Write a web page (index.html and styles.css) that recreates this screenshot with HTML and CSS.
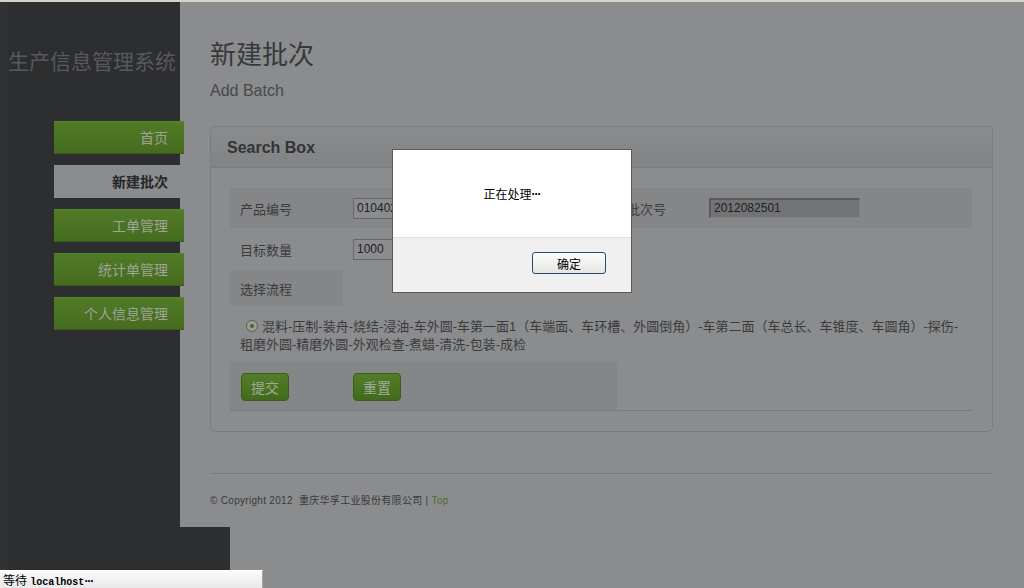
FILE: index.html
```html
<!DOCTYPE html>
<html lang="zh-CN">
<head>
<meta charset="utf-8">
<title>新建批次</title>
<link rel="stylesheet" href="styles.css">
</head>
<body>
<div class="topline"></div>
<div class="wrap">
  <aside class="sidebar">
    <div class="brand">生产信息管理系统</div>
    <nav class="menu">
      <a class="item">首页</a>
      <a class="item active">新建批次</a>
      <a class="item">工单管理</a>
      <a class="item">统计单管理</a>
      <a class="item">个人信息管理</a>
    </nav>
  </aside>
  <main class="main">
    <h1 class="title">新建批次</h1>
    <div class="subtitle">Add Batch</div>
    <section class="panel">
      <div class="panel-head">Search Box</div>
      <div class="panel-body">
        <table class="form">
          <colgroup>
            <col class="c1"><col class="c2"><col class="c3"><col class="c4">
          </colgroup>
          <tr class="r1 shade">
            <td>产品编号</td>
            <td><span class="input">0104021</span></td>
            <td>批次号</td>
            <td><span class="input disabled">2012082501</span></td>
          </tr>
          <tr class="r2">
            <td>目标数量</td>
            <td><span class="input">1000</span></td>
            <td></td>
            <td></td>
          </tr>
          <tr class="r3">
            <td class="shade">选择流程</td>
            <td></td>
            <td></td>
            <td></td>
          </tr>
          <tr class="r4">
            <td colspan="4" class="flow"><span class="radio"><span class="dot"></span></span>混料-压制-装舟-烧结-浸油-车外圆-车第一面1（车端面、车环槽、外圆倒角）-车第二面（车总长、车锥度、车圆角）-探伤-粗磨外圆-精磨外圆-外观检查-煮蜡-清洗-包装-成检</td>
          </tr>
          <tr class="r5">
            <td class="shade btn1"><button class="btn">提交</button></td>
            <td class="shade"><button class="btn">重置</button></td>
            <td></td>
            <td></td>
          </tr>
        </table>
      </div>
    </section>
    <div class="footer">
      <div class="copy">© Copyright 2012 &nbsp;重庆华孚工业股份有限公司 | <span class="top">Top</span></div>
    </div>
  </main>
</div>
<div class="bottom-dark"></div>

<div class="modal">
  <div class="modal-body">正在处理<span class="dots">···</span></div>
  <div class="modal-foot"><button class="ok">确定</button></div>
</div>

<div class="statusbar"><span class="cjk">等待</span> <span class="mono">localhost</span><span class="sdots">···</span></div>
</body>
</html>
```

FILE: styles.css
```css
* { box-sizing: border-box; }
html, body { margin: 0; padding: 0; }
body {
  width: 1024px;
  height: 588px;
  overflow: hidden;
  background: #8b8c8e;
  font-family: "Liberation Sans", "Noto Sans CJK SC", sans-serif;
  color: #3a3b3d;
}
.topline { height: 2px; background: #d6d3c9; }
.wrap { display: flex; height: 525px; }

.sidebar {
  width: 180px;
  flex: none;
  background: #2d2e30;
  border-left: 8px solid #313234;
  padding-top: 45px;
  z-index: 1;
}
.brand {
  font-size: 21px;
  line-height: 30px;
  color: #58595c;
  white-space: nowrap;
}
.menu {
  margin-top: 44px;
  padding-left: 46px;
  display: flex;
  flex-direction: column;
  gap: 11px;
}
.item {
  display: block;
  width: 130px;
  height: 33px;
  line-height: 33px;
  text-align: right;
  padding-right: 16px;
  font-size: 14px;
  color: #9fa498;
  background: linear-gradient(#517b27, #466b1f);
  border-top: 1px solid #58832d;
  border-bottom: 1px solid #3c5b1b;
  white-space: nowrap;
}
.item.active {
  background: #8b8c8e;
  border-color: #8b8c8e;
  color: #262728;
  font-weight: bold;
}

.main { flex: 1; padding: 38px 31px 0 30px; }
.title {
  margin: 0;
  font-size: 26px;
  font-weight: normal;
  line-height: 30px;
  color: #38393c;
}
.subtitle {
  margin-top: 11px;
  font-size: 16px;
  line-height: 20px;
  color: #48494c;
}
.panel {
  margin-top: 25px;
  border: 1px solid #7a7b7d;
  border-radius: 5px;
}
.panel-head {
  height: 41px;
  line-height: 41px;
  padding-left: 16px;
  border-bottom: 1px solid #7a7b7d;
  border-radius: 5px 5px 0 0;
  background: linear-gradient(#8a8b8d, #828385);
  font-size: 16px;
  font-weight: bold;
  color: #333436;
}
.panel-body { padding: 20px 20px 20px 19px; }

.form {
  border-collapse: collapse;
  width: 742px;
  table-layout: fixed;
  border-bottom: 1px solid #7a7b7d;
}
.c1 { width: 113px; }
.c2 { width: 274px; }
.c3 { width: 82px; }
.c4 { width: 273px; }
.form td {
  padding: 0 0 0 10px;
  font-size: 13px;
  vertical-align: middle;
  color: #3a3b3d;
  white-space: nowrap;
}
.shade, .form .shade td { background: #858688; }
.r1 td { height: 40px; }
.r2 td { height: 42px; }
.r3 td { height: 36px; }
.r5 td { height: 48px; padding-top: 2px; }
.form td.btn1 { padding-left: 11px; }
.form td.flow {
  white-space: normal;
  padding: 12px 10px 8px 10px;
  line-height: 18px;
}

.input {
  display: inline-block;
  width: 151px;
  height: 21px;
  line-height: 19px;
  padding-left: 3px;
  border: 1px solid #636870;
  background: #8b8c8e;
  font-size: 12px;
  color: #1f2022;
  vertical-align: middle;
}
.input.disabled {
  height: 20px;
  line-height: 17px;
  background: #727375;
  border-top: 2px solid #5a5b5d;
  border-left: 2px solid #5a5b5d;
  border-right: 1px solid #7e7f81;
  border-bottom: 1px solid #7e7f81;
}

.radio {
  display: inline-block;
  width: 12px;
  height: 12px;
  margin: 0 4px 0 6px;
  border: 1px solid #56615a;
  border-radius: 50%;
  background: #9a9c9a;
  vertical-align: -1px;
  position: relative;
}
.radio .dot {
  position: absolute;
  left: 3px;
  top: 3px;
  width: 4px;
  height: 4px;
  border-radius: 50%;
  background: #3f6a22;
}

.btn {
  width: 48px;
  height: 28px;
  padding: 0;
  border: 1px solid #3b5c1b;
  border-radius: 4px;
  background: linear-gradient(#527d28, #426a1c);
  color: #a3a89c;
  font-family: "Liberation Sans", "Noto Sans CJK SC", sans-serif;
  font-size: 14px;
}

.footer {
  margin-top: 41px;
  border-top: 1px solid #7a7b7d;
}
.copy {
  margin-top: 20px;
  font-size: 10px;
  line-height: 14px;
  color: #38393b;
  letter-spacing: 0.3px;
}
.top { color: #4e6c2b; }

.bottom-dark {
  width: 230px;
  height: 43px;
  background: #2d2e30;
  border-left: 8px solid #313234;
}

.modal {
  position: fixed;
  left: 392px;
  top: 149px;
  width: 240px;
  height: 144px;
  border: 1px solid #5a5a5a;
  background: #fff;
  display: flex;
  flex-direction: column;
  z-index: 10;
}
.modal-body {
  height: 87px;
  display: flex;
  align-items: center;
  justify-content: center;
  font-family: "Noto Sans CJK SC", sans-serif;
  font-size: 12px;
  color: #000;
}
.dots { font-weight: bold; letter-spacing: -1px; font-family: "Liberation Sans", sans-serif; }
.modal-foot {
  flex: 1;
  background: #f0f0f0;
  border-top: 1px solid #e0e0e0;
  display: flex;
  justify-content: flex-end;
  align-items: flex-start;
  padding: 14px 25px 0 0;
}
.ok {
  width: 74px;
  height: 22px;
  padding: 0;
  border: 1px solid #2d4766;
  border-radius: 3px;
  background: linear-gradient(#fefefe, #e5e5e3);
  font-family: "Noto Sans CJK SC", sans-serif;
  font-size: 12px;
  color: #000;
}

.statusbar {
  position: fixed;
  left: 0;
  bottom: 0;
  width: 263px;
  height: 18px;
  padding-left: 3px;
  background: linear-gradient(#fbfbfb, #e8e8e8);
  border-top: 1px solid #ffffff;
  border-right: 1px solid #a3a3a3;
  line-height: 17px;
  font-size: 12px;
  color: #000;
  z-index: 11;
}
.cjk { font-family: "Noto Sans CJK SC", sans-serif; }
.mono { font-family: "Liberation Mono", monospace; font-size: 10px; font-weight: bold; }
.sdots { font-family: "Liberation Sans", sans-serif; font-weight: bold; letter-spacing: -1px; }
```
